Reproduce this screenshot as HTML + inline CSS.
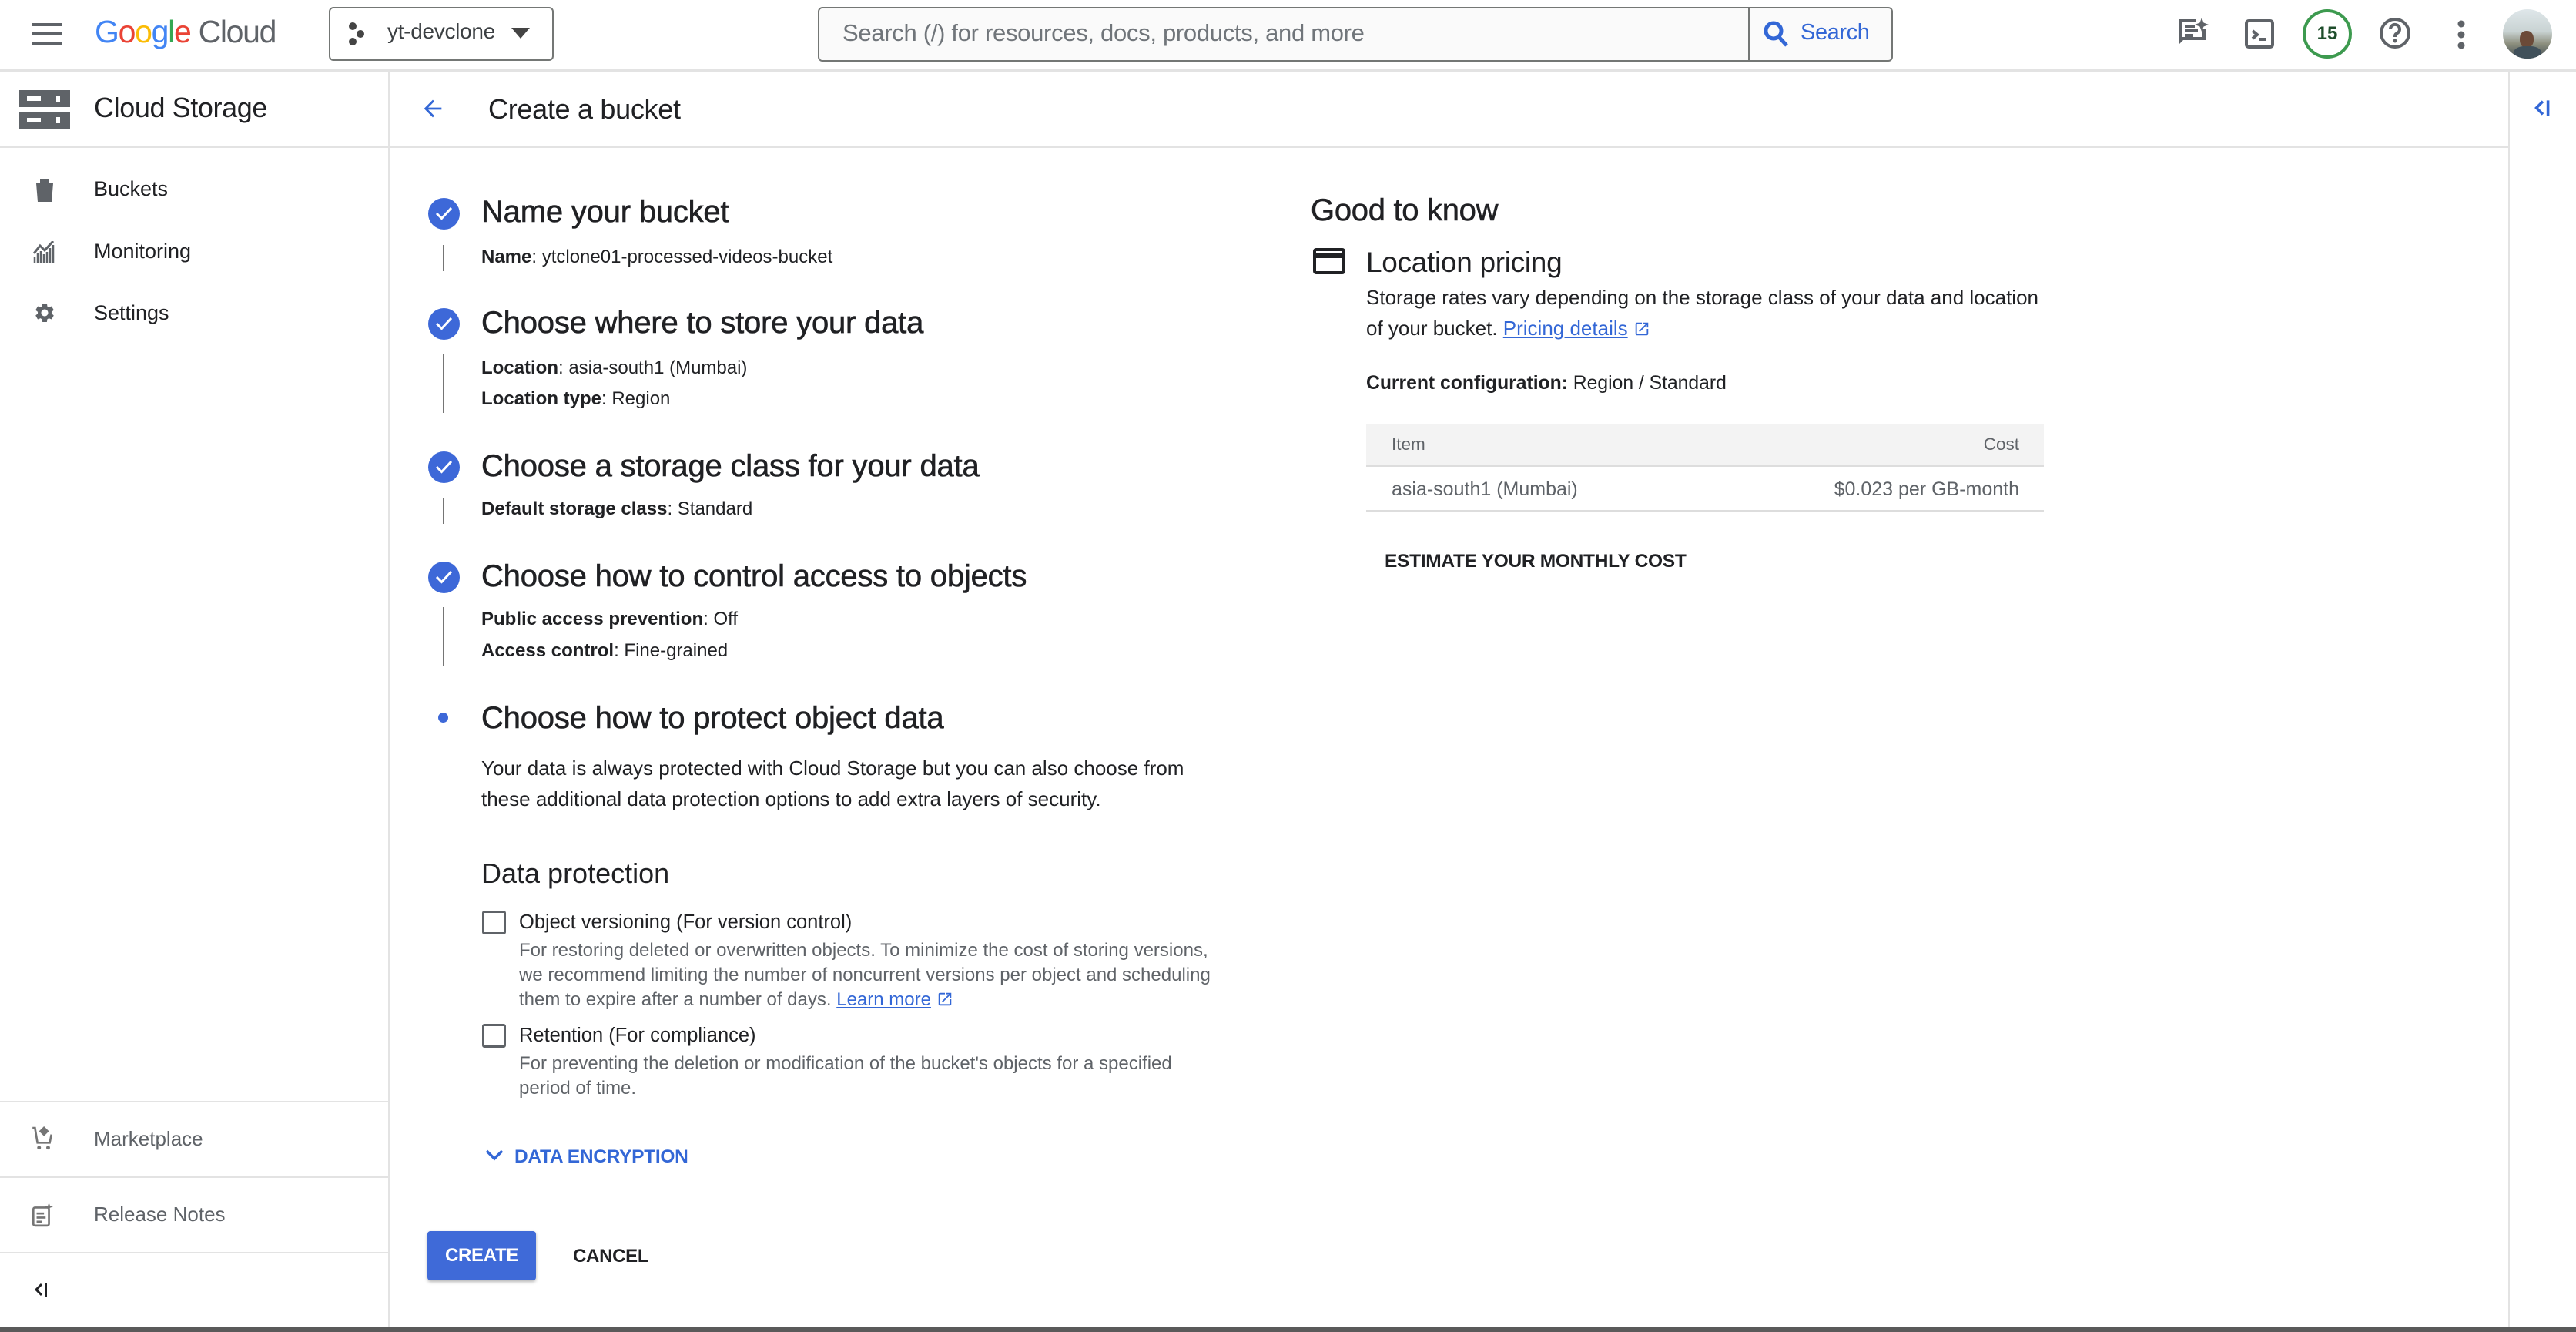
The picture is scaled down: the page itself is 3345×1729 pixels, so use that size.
<!DOCTYPE html>
<html><head><meta charset="utf-8">
<style>
*{box-sizing:border-box;margin:0;padding:0}
html,body{width:3345px;height:1729px;overflow:hidden;background:#fff;font-family:"Liberation Sans",Arial,sans-serif;color:#202124}
.a{position:absolute;white-space:nowrap}
.g{color:#5f6368}
b{font-weight:700}
</style></head><body>
<!-- header -->
<div class="a" style="left:0;top:90px;width:3345px;height:3px;background:#e3e3e3"></div>
<svg class="a" style="left:41px;top:30px" width="40" height="28" viewBox="0 0 40 28"><rect x="0" y="0" width="40" height="4" fill="#5f6368"/><rect x="0" y="12" width="40" height="4" fill="#5f6368"/><rect x="0" y="24" width="40" height="4" fill="#5f6368"/></svg>
<div class="a" style="left:123px;top:18px;font-size:41px;letter-spacing:-1.3px"><span style="color:#4285f4">G</span><span style="color:#ea4335">o</span><span style="color:#fbbc05">o</span><span style="color:#4285f4">g</span><span style="color:#34a853">l</span><span style="color:#ea4335">e</span> <span style="color:#5f6368">Cloud</span></div>
<div class="a" style="left:427px;top:9px;width:292px;height:70px;border:2px solid #747775;border-radius:6px"></div>
<svg class="a" style="left:452px;top:28px" width="22" height="32" viewBox="0 0 22 32"><circle cx="6" cy="6" r="5" fill="#444"/><circle cx="16" cy="16" r="5" fill="#444"/><circle cx="6" cy="26" r="5" fill="#444"/></svg>
<div class="a" style="left:503px;top:25px;font-size:28px;color:#3c4043;letter-spacing:-0.3px">yt-devclone</div>
<svg class="a" style="left:664px;top:36px" width="24" height="14"><path d="M0 0H24L12 14Z" fill="#444"/></svg>
<div class="a" style="left:1062px;top:9px;width:1396px;height:71px;border:2px solid #747775;border-radius:6px;background:#fafafa"></div>
<div class="a" style="left:2270px;top:11px;width:2px;height:67px;background:#747775"></div>
<div class="a" style="left:1094px;top:25px;font-size:31px;color:#70757a;letter-spacing:-0.3px">Search (/) for resources, docs, products, and more</div>
<svg class="a" style="left:2290px;top:27px" width="34" height="36" viewBox="0 0 34 36"><circle cx="13" cy="13" r="10" fill="none" stroke="#3367d6" stroke-width="5"/><path d="M20 21L30 32" stroke="#3367d6" stroke-width="5"/></svg>
<div class="a" style="left:2338px;top:26px;font-size:29px;color:#3367d6;letter-spacing:-0.4px">Search</div>
<svg class="a" style="left:2826px;top:22px" width="42" height="42" viewBox="0 0 42 42"><path d="M3 5V36L9 30H38V16H34V26H7V7H26V3H3Z" fill="#5f6368"/><rect x="11" y="10" width="13" height="4" fill="#5f6368"/><rect x="11" y="16" width="17" height="4" fill="#5f6368"/><rect x="11" y="22" width="11" height="4" fill="#5f6368"/><path d="M33 1L35.5 7.5L42 10L35.5 12.5L33 19L30.5 12.5L24 10L30.5 7.5Z" fill="#5f6368"/></svg>
<svg class="a" style="left:2915px;top:25px" width="38" height="38" viewBox="0 0 38 38"><rect x="2" y="2" width="34" height="34" rx="3" fill="none" stroke="#5f6368" stroke-width="4"/><path d="M10 15L16 20L10 25" fill="none" stroke="#5f6368" stroke-width="4"/><rect x="18" y="24" width="9" height="4" fill="#5f6368"/></svg>
<div class="a" style="left:2990px;top:12px;width:64px;height:64px;border:4px solid #3d9a4f;border-radius:50%;font-size:24px;font-weight:700;color:#1e4d2b;text-align:center;line-height:56px">15</div>
<svg class="a" style="left:3089px;top:22px" width="42" height="42" viewBox="0 0 42 42"><circle cx="21" cy="21" r="18" fill="none" stroke="#5f6368" stroke-width="4"/><path d="M15 16a6 6 0 1 1 8 5.5c-2 1-2 2.5-2 4.5" fill="none" stroke="#5f6368" stroke-width="4"/><circle cx="21" cy="31" r="2.5" fill="#5f6368"/></svg>
<svg class="a" style="left:3190px;top:26px" width="12" height="38"><circle cx="6" cy="5" r="4.5" fill="#5f6368"/><circle cx="6" cy="19" r="4.5" fill="#5f6368"/><circle cx="6" cy="33" r="4.5" fill="#5f6368"/></svg>
<div class="a" style="left:3250px;top:12px;width:64px;height:64px;border-radius:50%;background:linear-gradient(180deg,#dfe7ea 0%,#c9d3d3 45%,#8d8f7e 70%,#3f4b52 100%);overflow:hidden"><div style="position:absolute;left:22px;top:28px;width:18px;height:22px;border-radius:45%;background:#6b4a38"></div><div style="position:absolute;left:14px;top:48px;width:36px;height:20px;border-radius:40% 40% 0 0;background:#40505a"></div></div>

<!-- sidebar -->
<div class="a" style="left:504px;top:92px;width:2px;height:1632px;background:#e3e3e3"></div>
<div class="a" style="left:0;top:189px;width:3258px;height:3px;background:#e3e3e3"></div>
<svg class="a" style="left:25px;top:117px" width="66" height="50" viewBox="0 0 66 50"><rect x="0" y="0" width="66" height="22" fill="#5f6368"/><rect x="0" y="28" width="66" height="22" fill="#5f6368"/><rect x="10" y="8" width="18" height="6" fill="#fff"/><rect x="10" y="36" width="18" height="6" fill="#fff"/><rect x="48" y="7" width="5" height="8" fill="#fff"/><rect x="48" y="35" width="5" height="8" fill="#fff"/></svg>
<div class="a" style="left:122px;top:119px;font-size:36px;color:#202124;letter-spacing:-0.4px">Cloud Storage</div>
<svg class="a" style="left:45px;top:232px" width="26" height="30" viewBox="0 0 26 30"><path d="M7 0H19V6H24L22 30H4L2 6H7Z" fill="#5f6368"/></svg>
<div class="a" style="left:122px;top:230px;font-size:27px">Buckets</div>
<svg class="a" style="left:43px;top:313px" width="28" height="28" viewBox="0 0 28 28"><path d="M1 16L9 6L15 12L26 0" fill="none" stroke="#5f6368" stroke-width="3"/><path d="M2 28V20M6 28V16M10 28V13M14 28V17M18 28V14M22 28V9M26 28V5" stroke="#5f6368" stroke-width="2.5"/></svg>
<div class="a" style="left:122px;top:311px;font-size:27px">Monitoring</div>
<svg class="a" style="left:43px;top:391px" width="30" height="30" viewBox="0 0 24 24"><path fill="#5f6368" d="M19.14 12.94c.04-.3.06-.61.06-.94 0-.32-.02-.64-.07-.94l2.03-1.58a.49.49 0 0 0 .12-.61l-1.920-3.32a.488.488 0 0 0-.59-.22l-2.39.96c-.5-.38-1.03-.7-1.62-.94l-.36-2.540a.484.484 0 0 0-.48-.41h-3.84c-.24 0-.43.17-.47.41l-.36 2.54c-.59.24-1.13.57-1.62.94l-2.39-.96c-.22-.08-.47 0-.59.22L2.74 8.87c-.12.21-.08.47.12.61l2.03 1.58c-.05.3-.09.63-.09.94s.02.64.07.94l-2.030 1.58a.49.49 0 0 0-.12.61l1.92 3.32c.12.22.37.29.59.22l2.39-.96c.5.38 1.03.7 1.62.94l.36 2.54c.05.24.24.41.48.41h3.84c.24 0 .44-.17.47-.41l.36-2.54c.59-.24 1.13-.56 1.62-.94l2.39.96c.22.08.47 0 .59-.22l1.92-3.32c.12-.22.07-.47-.12-.61l-2.01-1.58zM12 15.6c-1.98 0-3.6-1.62-3.6-3.6s1.62-3.6 3.6-3.6 3.6 1.62 3.6 3.6-1.62 3.6-3.6 3.6z"/></svg>
<div class="a" style="left:122px;top:391px;font-size:27px">Settings</div>

<div class="a" style="left:0;top:1429px;width:505px;height:2px;background:#e3e3e3"></div>
<div class="a" style="left:0;top:1527px;width:505px;height:2px;background:#e3e3e3"></div>
<div class="a" style="left:0;top:1625px;width:505px;height:2px;background:#e3e3e3"></div>
<svg class="a" style="left:40px;top:1462px" width="30" height="32" viewBox="0 0 26 30"><path d="M1 2L4 2L7 20H22L24 10" fill="none" stroke="#757575" stroke-width="2.5"/><path d="M15 0L21 6L15 12L9 6Z" fill="#757575"/><circle cx="9" cy="26" r="2.3" fill="#757575"/><circle cx="20" cy="26" r="2.3" fill="#757575"/></svg>
<div class="a" style="left:122px;top:1463px;font-size:26px;color:#5f6368">Marketplace</div>
<svg class="a" style="left:40px;top:1561px" width="30" height="32" viewBox="0 0 26 30"><rect x="2" y="6" width="19" height="22" rx="2" fill="none" stroke="#757575" stroke-width="2.5"/><rect x="6" y="12" width="9" height="2.5" fill="#757575"/><rect x="6" y="17" width="11" height="2.5" fill="#757575"/><rect x="6" y="22" width="7" height="2.5" fill="#757575"/><path d="M21 0L22.3 3.7L26 5L22.3 6.3L21 10L19.7 6.3L16 5L19.7 3.7Z" fill="#757575"/></svg>
<div class="a" style="left:122px;top:1561px;font-size:26px;color:#5f6368">Release Notes</div>
<svg class="a" style="left:44px;top:1664px" width="20" height="20" viewBox="0 0 20 20"><path d="M10 3L3 10L10 17" fill="none" stroke="#202124" stroke-width="3"/><rect x="14" y="2" width="3" height="17" fill="#202124"/></svg>

<!-- right rail -->
<div class="a" style="left:3257px;top:92px;width:2px;height:1632px;background:#e3e3e3"></div>
<svg class="a" style="left:3290px;top:128px" width="24" height="24" viewBox="0 0 20 20"><path d="M10 3L3 10L10 17" fill="none" stroke="#3367d6" stroke-width="3"/><rect x="14" y="2" width="3" height="17" fill="#3367d6"/></svg>

<!-- page header -->
<svg class="a" style="left:545px;top:124px" width="34" height="34" viewBox="0 0 24 24"><path d="M20 11H7.83l5.59-5.59L12 4l-8 8 8 8 1.41-1.41L7.83 13H20v-2z" fill="#3367d6"/></svg>
<div class="a" style="left:634px;top:121px;font-size:36px;letter-spacing:-0.3px">Create a bucket</div>

<!-- steps -->
<style>
.ck{position:absolute;left:556px;width:41px;height:41px;border-radius:50%;background:#3d68d8}
.ck svg{position:absolute;left:9px;top:10px}
.h{position:absolute;left:625px;font-size:40px;letter-spacing:-0.2px;white-space:nowrap;-webkit-text-stroke:0.6px #202124}
.d{position:absolute;left:625px;font-size:24px;white-space:nowrap}
.vl{position:absolute;left:575px;width:2px;background:#757575}
.cb{position:absolute;left:626px;width:31px;height:31px;border:3px solid #5f6368;border-radius:3px}
.lab{position:absolute;left:674px;font-size:25.5px;white-space:nowrap}
.ds{position:absolute;left:674px;font-size:24px;line-height:32px;white-space:nowrap;color:#5f6368}
</style>
<div class="ck" style="top:257px"><svg width="23" height="20" viewBox="0 0 23 20"><path d="M2 10L8.5 16.5L21 3" fill="none" stroke="#fff" stroke-width="3"/></svg></div>
<div class="h" style="top:253px">Name your bucket</div>
<div class="vl" style="top:318px;height:34px"></div>
<div class="d" style="top:320px"><b>Name</b>: ytclone01-processed-videos-bucket</div>

<div class="ck" style="top:400px"><svg width="23" height="20" viewBox="0 0 23 20"><path d="M2 10L8.5 16.5L21 3" fill="none" stroke="#fff" stroke-width="3"/></svg></div>
<div class="h" style="top:397px">Choose where to store your data</div>
<div class="vl" style="top:460px;height:76px"></div>
<div class="d" style="top:464px"><b>Location</b>: asia-south1 (Mumbai)</div>
<div class="d" style="top:504px"><b>Location type</b>: Region</div>

<div class="ck" style="top:586px"><svg width="23" height="20" viewBox="0 0 23 20"><path d="M2 10L8.5 16.5L21 3" fill="none" stroke="#fff" stroke-width="3"/></svg></div>
<div class="h" style="top:583px">Choose a storage class for your data</div>
<div class="vl" style="top:646px;height:34px"></div>
<div class="d" style="top:647px"><b>Default storage class</b>: Standard</div>

<div class="ck" style="top:729px"><svg width="23" height="20" viewBox="0 0 23 20"><path d="M2 10L8.5 16.5L21 3" fill="none" stroke="#fff" stroke-width="3"/></svg></div>
<div class="h" style="top:726px">Choose how to control access to objects</div>
<div class="vl" style="top:788px;height:76px"></div>
<div class="d" style="top:790px"><b>Public access prevention</b>: Off</div>
<div class="d" style="top:831px"><b>Access control</b>: Fine-grained</div>

<div class="a" style="left:569px;top:925px;width:13px;height:13px;border-radius:50%;background:#3d68d8"></div>
<div class="h" style="top:910px">Choose how to protect object data</div>
<div class="a" style="left:625px;top:977px;font-size:26px;line-height:40px">Your data is always protected with Cloud Storage but you can also choose from<br>these additional data protection options to add extra layers of security.</div>
<div class="a" style="left:625px;top:1113px;font-size:36px">Data protection</div>

<div class="cb" style="top:1182px"></div>
<div class="lab" style="top:1183px">Object versioning (For version control)</div>
<div class="ds" style="top:1218px">For restoring deleted or overwritten objects. To minimize the cost of storing versions,<br>we recommend limiting the number of noncurrent versions per object and scheduling<br>them to expire after a number of days. <span style="color:#3367d6;text-decoration:underline">Learn more</span> <svg width="22" height="22" viewBox="0 0 24 24" style="vertical-align:-3px"><path d="M19 19H5V5h7V3H5a2 2 0 0 0-2 2v14a2 2 0 0 0 2 2h14c1.1 0 2-.9 2-2v-7h-2v7zM14 3v2h3.59l-9.83 9.83 1.41 1.41L19 6.41V10h2V3h-7z" fill="#3367d6"/></svg></div>

<div class="cb" style="top:1329px"></div>
<div class="lab" style="top:1330px">Retention (For compliance)</div>
<div class="ds" style="top:1365px">For preventing the deletion or modification of the bucket's objects for a specified<br>period of time.</div>

<svg class="a" style="left:630px;top:1492px" width="24" height="16" viewBox="0 0 24 16"><path d="M2 2L12 12L22 2" fill="none" stroke="#3367d6" stroke-width="3.5"/></svg>
<div class="a" style="left:668px;top:1488px;font-size:24.5px;color:#3367d6;font-weight:700;letter-spacing:-0.3px">DATA ENCRYPTION</div>

<div class="a" style="left:555px;top:1598px;width:141px;height:64px;background:#3f6ad8;border-radius:4px;box-shadow:0 2px 4px rgba(0,0,0,.3);color:#fff;font-size:24px;font-weight:700;text-align:center;line-height:64px;letter-spacing:-0.3px">CREATE</div>
<div class="a" style="left:744px;top:1617px;font-size:24px;font-weight:700;letter-spacing:-0.3px">CANCEL</div>

<!-- right panel -->
<div class="a" style="left:1702px;top:251px;font-size:40px;letter-spacing:-0.3px;-webkit-text-stroke:0.5px #202124">Good to know</div>
<svg class="a" style="left:1705px;top:322px" width="42" height="34" viewBox="0 0 42 34"><rect x="2" y="2" width="38" height="30" rx="2" fill="none" stroke="#202124" stroke-width="4"/><rect x="2" y="7" width="38" height="6" fill="#202124"/></svg>
<div class="a" style="left:1774px;top:320px;font-size:37px;letter-spacing:-0.3px">Location pricing</div>
<div class="a" style="left:1774px;top:366px;font-size:26px;line-height:40px">Storage rates vary depending on the storage class of your data and location<br>of your bucket. <span style="color:#3367d6;text-decoration:underline">Pricing details</span> <svg width="22" height="22" viewBox="0 0 24 24" style="vertical-align:-3px"><path d="M19 19H5V5h7V3H5a2 2 0 0 0-2 2v14a2 2 0 0 0 2 2h14c1.1 0 2-.9 2-2v-7h-2v7zM14 3v2h3.59l-9.83 9.83 1.41 1.41L19 6.41V10h2V3h-7z" fill="#3367d6"/></svg></div>
<div class="a" style="left:1774px;top:484px;font-size:24.7px"><b>Current configuration:</b> Region / Standard</div>
<div class="a" style="left:1774px;top:550px;width:880px;height:56px;background:#f3f3f3;border-bottom:2px solid #ddd"></div>
<div class="a g" style="left:1807px;top:564px;font-size:22.5px">Item</div>
<div class="a g" style="left:2560px;top:564px;font-size:22.5px;width:62px;text-align:right">Cost</div>
<div class="a" style="left:1774px;top:662px;width:880px;height:2px;background:#ddd"></div>
<div class="a g" style="left:1807px;top:621px;font-size:25px">asia-south1 (Mumbai)</div>
<div class="a g" style="left:2272px;top:621px;font-size:25px;width:350px;text-align:right">$0.023 per GB-month</div>
<div class="a" style="left:1798px;top:715px;font-size:24.5px;font-weight:700;letter-spacing:-0.3px">ESTIMATE YOUR MONTHLY COST</div>

<!-- bottom frame edge -->
<div class="a" style="left:0;top:1722px;width:3345px;height:7px;background:#5a5a5a"></div>
</body></html>
